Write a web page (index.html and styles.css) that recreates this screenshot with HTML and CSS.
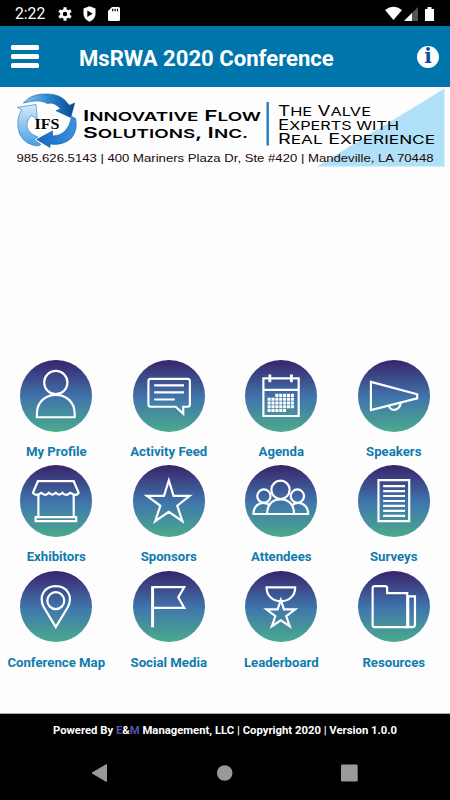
FILE: index.html
```
<!DOCTYPE html>
<html lang="en">
<head>
    <meta charset="UTF-8">
    <title>MsRWA 2020 Conference</title>
    <link rel="stylesheet" href="styles.css">
</head>
<body>
    <div class="status">
        <span class="time">2:22</span>
        <svg class="gear" width="14" height="14" viewBox="0 0 14 14">
            <circle cx="7" cy="7" r="3.6" fill="none" stroke="#fff" stroke-width="2.7"/>
            <path d="M7 .2V3M7 11v2.8M1.1 3.6l2.5 1.5M10.4 8.9l2.5 1.5M1.1 10.4l2.5-1.5M10.4 5.1l2.5-1.5" stroke="#fff" stroke-width="3"/>
        </svg>
        <svg class="shield" width="13" height="16" viewBox="0 0 13 16">
            <path d="M6.5.3 12.5 2.6V8Q12.5 13 6.5 15.7.5 13 .5 8V2.6Z" fill="#fff"/>
            <path d="M4.3 4.5 9.6 7.7 4.3 10.9Z"/>
        </svg>
        <svg class="card" width="12" height="14" viewBox="0 0 12 14">
            <path d="M4 0h6.5Q12 0 12 1.5v11Q12 14 10.5 14h-9Q0 14 0 12.5V4Z" fill="#fff"/>
            <path d="M4.7 1.7v2.6M7.1 1.7v2.6M9.5 1.7v2.6" stroke="#000" stroke-width="1.2"/>
        </svg>
        <svg class="signal" width="50" height="16" viewBox="0 0 50 16">
            <path d="M0 4Q8.5-2.5 17 4L8.5 14Z" fill="#fff"/>
            <path d="M19 15 33 1V15Z" fill="#555"/>
            <path d="M19 15 27 7V15Z" fill="#fff"/>
            <path d="M40 3h2.5V1h4v2H49v12h-9Z" fill="#fff"/>
        </svg>
    </div>
    <div class="header">
        <div class="menu"><span></span><span></span><span></span></div>
        <h1>MsRWA 2020 Conference</h1>
        <div class="info">i</div>
    </div>
    <div class="banner">
        <svg width="450" height="84" viewBox="0 87 450 84">
            <defs>
                <linearGradient id="arrow1" x1="0" y1="0" x2="1" y2="0">
                    <stop offset="0" stop-color="#8cc8f3"/><stop offset=".5" stop-color="#2a85d0"/><stop offset="1" stop-color="#07488f"/>
                </linearGradient>
                <linearGradient id="arrow2" x1="0" y1="0" x2="1" y2="0">
                    <stop offset="0" stop-color="#1668bb"/><stop offset="1" stop-color="#3a92e0"/>
                </linearGradient>
                <linearGradient id="arrow3" x1="0" y1="0" x2="0" y2="1">
                    <stop offset="0" stop-color="#d3eafb"/><stop offset="1" stop-color="#4a9fe4"/>
                </linearGradient>
            </defs>
            <path d="M444.5 88.5V166.5H317Z" fill="#b0e1f8"/>
            <path d="M23.3 103Q31 94.5 42 94.2 61 92 69.3 105.3L74.7 103 70.7 117.5 56 110.7 60.5 108.7Q54 101.5 47.5 103.5 40 98.5 23.3 103Z" fill="url(#arrow1)" stroke="#07539c" stroke-width=".6"/>
            <path d="M71.7 116.5 75.5 118.5Q78 130 71.5 138 63 146 50 144V147.5L36.7 139.5 52.5 131V136Q68 136 71.7 116.5Z" fill="url(#arrow2)" stroke="#07539c" stroke-width=".6"/>
            <path d="M38 146Q25 145 19.5 134 15 120 21.7 109.7L17.3 107.3 36 104.5 37.3 119 31 115.3Q26 121 27 127 29 134 38 137L34 139.5 41 144.5Z" fill="url(#arrow3)" stroke="#2778bb" stroke-width=".6"/>
            <text class="ifs" x="34.5" y="128.5" textLength="25" lengthAdjust="spacingAndGlyphs">IFS</text>
            <text class="company" x="83" y="121" textLength="178" lengthAdjust="spacingAndGlyphs">I<tspan>NNOVATIVE</tspan> F<tspan>LOW</tspan></text>
            <text class="company" x="83" y="137.5" textLength="165" lengthAdjust="spacingAndGlyphs">S<tspan>OLUTIONS</tspan>, I<tspan>NC.</tspan></text>
            <path d="M267.7 102V145.5" stroke="#167cc2" stroke-width="2.3"/>
            <text class="slogan" x="278" y="115.5" textLength="93" lengthAdjust="spacingAndGlyphs">T<tspan>HE</tspan> V<tspan>ALVE</tspan></text>
            <text class="slogan" x="278" y="129.7" textLength="121" lengthAdjust="spacingAndGlyphs">E<tspan>XPERTS WITH</tspan></text>
            <text class="slogan" x="278" y="144" textLength="157" lengthAdjust="spacingAndGlyphs">R<tspan>EAL</tspan> E<tspan>XPERIENCE</tspan></text>
            <text class="address" x="16.5" y="162" textLength="417" lengthAdjust="spacingAndGlyphs">985.626.5143 | 400 Mariners Plaza Dr, Ste #420 | Mandeville, LA 70448</text>
        </svg>
    </div>
    <div class="grid">
        <div class="item">
            <svg class="icon" viewBox="0 0 72 72">
                <circle cx="36" cy="22.7" r="11.7"/>
                <path d="M17 57.6V54C17 43 25 35 36 35S55 43 55 54V57.6Z"/>
            </svg>
            <p>My Profile</p>
        </div>
        <div class="item">
            <svg class="icon" viewBox="0 0 72 72">
                <path d="M17.7 19H55Q57.2 19 57.2 21.5V44.5Q57.2 47 55 47H50.5V54L43 47H17.7Q15.5 47 15.5 44.5V21.5Q15.5 19 17.7 19Z"/>
                <path d="M21.3 25.5H51.3M21.3 32.5H51.3M21.3 39.7H42"/>
            </svg>
            <p>Activity Feed</p>
        </div>
        <div class="item">
            <svg class="icon" viewBox="0 0 72 72">
                <path d="M18.5 18.5H54V56.3H18.5ZM18.5 30H54"/>
                <path d="M25 14.7V22.5M46.7 14.7V22.5" stroke-width="2.8"/>
                <path class="days" d="M30.5 35.6H49.3M22.7 39.4H49.3M22.7 43.2H49.3M22.7 47H49.3M22.7 50.8H41.5"/>
            </svg>
            <p>Agenda</p>
        </div>
        <div class="item">
            <svg class="icon" viewBox="0 0 72 72">
                <path d="M13 22 59.5 34.5V38.5L13 50.3Z"/>
                <path d="M31 45.7C32 52 42 52 43 42.7"/>
            </svg>
            <p>Speakers</p>
        </div>
        <div class="item">
            <svg class="icon" viewBox="0 0 72 72">
                <path d="M18 16.3H54L59 28Q57 31 53.5 29.5L50.5 28Q46 32 42.5 28 39.5 31.5 36 28 32.5 31.5 29 28 25.5 32 21.5 28 16 32 13 28Z"/>
                <path d="M18.5 30V52M54 30V52"/>
                <path d="M15.7 52.5H56.5V56.5H15.7Z"/>
            </svg>
            <p>Exhibitors</p>
        </div>
        <div class="item">
            <svg class="icon" viewBox="0 0 72 72">
                <path d="M36 15.5 40.8 31H57L44.5 41 49.7 56.5 36 47 22.3 56.5 27.5 41 14 31H31.2Z"/>
            </svg>
            <p>Sponsors</p>
        </div>
        <div class="item">
            <svg class="icon" viewBox="0 0 72 72">
                <circle cx="35.7" cy="25" r="9.2"/>
                <circle cx="19" cy="31.3" r="6.7"/>
                <circle cx="52.7" cy="31.3" r="6.7"/>
                <path d="M22.3 49.3C22.3 40 27 34.5 35.7 34.5S49.3 40 49.3 49.3"/>
                <path d="M25.5 41C19 35 8.5 39 8.5 49.3H63.5C63.5 39 53 35 46.5 41"/>
            </svg>
            <p>Attendees</p>
        </div>
        <div class="item">
            <svg class="icon" viewBox="0 0 72 72">
                <path d="M20.6 15.3H51.5V56.5H20.6Z"/>
                <path d="M25.3 21.2H47.3M25.3 26.2H47.3M25.3 31.2H47.3M25.3 36.2H47.3M25.3 41.2H47.3M25.3 46.2H47.3M25.3 51.2H47.3"/>
            </svg>
            <p>Surveys</p>
        </div>
        <div class="item">
            <svg class="icon" viewBox="0 0 72 72">
                <path d="M36 56.5 24 36.5C18 25 25 15.3 36 15.3S54 25 48 36.5Z"/>
                <circle cx="36" cy="29.8" r="8.5"/>
            </svg>
            <p>Conference Map</p>
        </div>
        <div class="item">
            <svg class="icon" viewBox="0 0 72 72">
                <path d="M19.7 15.3V56.5" stroke-width="3"/>
                <path d="M19.7 16.3H51.5L45.5 26.5 51.5 37H19.7"/>
            </svg>
            <p>Social Media</p>
        </div>
        <div class="item">
            <svg class="icon" viewBox="0 0 72 72">
                <path d="M21.7 16.5H50.5C50.5 35 21.7 35 21.7 16.5Z"/>
                <path d="M36 29 39.2 38.5H50.5L41.5 45.5 45 55.5 36 49.5 27 55.5 30.5 45.5 21.5 38.5H32.8Z"/>
            </svg>
            <p>Leaderboard</p>
        </div>
        <div class="item">
            <svg class="icon" viewBox="0 0 72 72">
                <path d="M17 15.3H27Q29.3 15.3 29.3 17.5V22.3H49.5V56.5H17Q14.7 56.5 14.7 54.5V17.5Q14.7 15.3 17 15.3Z"/>
                <path d="M49.5 25.5H57.3V53.5Q57.3 56.5 54.5 56.5H53Q50.5 56.5 50.5 53.5V25.5M47 56.5H54"/>
            </svg>
            <p>Resources</p>
        </div>
    </div>
    <div class="footer">Powered By <span>E</span>&amp;<span>M</span> Management, LLC | Copyright 2020 | Version 1.0.0</div>
    <div class="nav">
        <svg width="450" height="20" viewBox="0 0 450 20" fill="#999">
            <path d="M92 10 106.5 1.5V18.5Z" stroke="#999" stroke-linejoin="round"/>
            <circle cx="224.7" cy="10" r="7.8"/>
            <rect x="341" y="1.5" width="16.7" height="17" rx="1.3"/>
        </svg>
    </div>
</body>
</html>
```

FILE: styles.css
```
* {
    margin: 0;
    padding: 0;
    box-sizing: border-box;
}
body {
    width: 450px;
    height: 800px;
    overflow: hidden;
    background-color: #fdfdfd;
    font-family: Roboto, "Liberation Sans", sans-serif;
}
svg {
    display: block;
}
.status {
    display: flex;
    align-items: center;
    height: 26px;
    padding: 1px 15px 0 15px;
    background-color: #000;
    color: #fff;
}
.time {
    width: 31px;
    font-size: 15.7px;
    font-weight: 400;
    line-height: 26px;
}
.gear {
    margin-left: 12px;
}
.shield {
    margin-left: 11px;
}
.card {
    margin-left: 12px;
}
.signal {
    margin-left: auto;
}
.header {
    display: flex;
    align-items: center;
    height: 61px;
    padding: 0 11px;
    background-color: #0075ab;
    color: #fff;
}
.menu {
    display: flex;
    flex-direction: column;
    gap: 4px;
    width: 28px;
}
.menu span {
    height: 5.3px;
    border-radius: 1.5px;
    background-color: #fff;
}
.header h1 {
    margin-left: 40px;
    padding-top: 2px;
    font-size: 22.1px;
    font-weight: 700;
    line-height: 30px;
    white-space: nowrap;
}
.info {
    width: 22px;
    height: 22px;
    margin-left: auto;
    border-radius: 50%;
    background-color: #fff;
    color: #0a4e9b;
    font: bold 20px/21px "DejaVu Serif", serif;
    text-align: center;
}
.banner {
    height: 273.3px;
}
.ifs {
    font: bold 14px "Liberation Serif", serif;
}
.company {
    font: 600 15px Inter, sans-serif;
}
.company tspan {
    font-size: 12.4px;
}
.slogan {
    font: 13.8px Inter, sans-serif;
}
.slogan tspan {
    font-size: 12px;
}
.address {
    font: 11.8px "Liberation Sans", sans-serif;
    fill: #1c0808;
}
.grid {
    display: grid;
    grid-template-columns: repeat(4, 1fr);
    grid-auto-rows: 105.2px;
    height: 353.2px;
}
.item {
    display: flex;
    flex-direction: column;
    align-items: center;
}
.icon {
    width: 71.6px;
    height: 71.6px;
    border-radius: 50%;
    background: linear-gradient(#39246b, #4075ac 52%, #4aab8d);
    fill: none;
    stroke: #fff;
    stroke-width: 2.2;
}
.days {
    stroke-width: 3.1;
    stroke-dasharray: 3.1 .8;
}
.item p {
    margin-top: 11.4px;
    color: #0f7bae;
    font-size: 13.2px;
    font-weight: 700;
    line-height: 18px;
    white-space: nowrap;
}
.footer {
    height: 35px;
    border-top: 1px solid #aaa;
    background-color: #000;
    color: #fff;
    font-size: 11.3px;
    font-weight: 700;
    line-height: 34px;
    text-align: center;
    white-space: nowrap;
}
.footer span {
    color: #5552b0;
}
.nav {
    height: 52px;
    padding-top: 14.5px;
    background-color: #000;
}
```
